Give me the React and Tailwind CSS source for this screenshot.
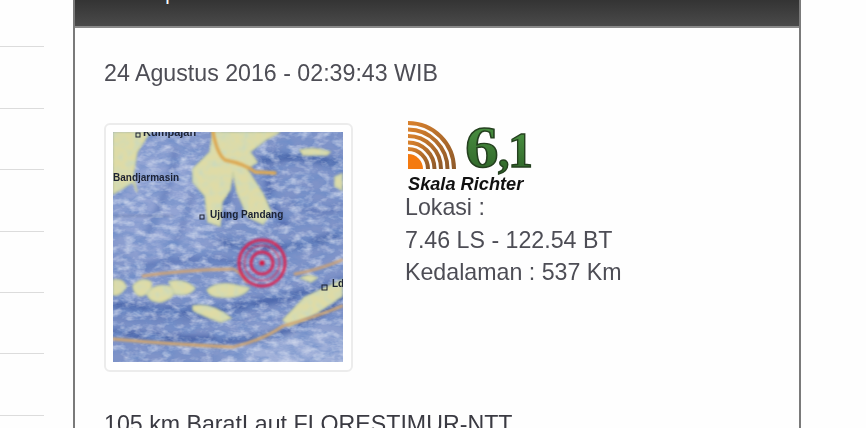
import React from 'react';

const LAND = [
    'M0 0 L37 0 L24 20 L20 44 L24 60 L20 50 L0 62 Z',
    'M100 0 L97 20 L80 37 L80 50 L92 64 L95 90 L107 94 L109 70 L117 58 L120 40 L124 60 L135 85 L150 92 L158 80 L150 62 L134 37 L144 30 L137 20 L154 7 L167 0 Z',
    'M187 18 Q202 14 217 20 L214 23 L190 23 Z',
    'M222 45 L229 42 L229 58 L222 54 Z',
    'M0 148 Q11 146 13 155 Q7 164 0 163 Z',
    'M20 154 Q28 144 38 150 Q40 161 28 164 Q21 163 20 154 Z',
    'M34 162 Q42 150 58 155 Q66 164 48 170 Q36 170 34 162 Z',
    'M56 150 Q70 146 82 156 Q78 164 62 162 Z',
    'M94 158 Q104 149 122 153 L136 156 Q130 166 110 165 Q98 166 94 158 Z',
    'M80 174 Q98 170 118 186 L108 190 Q90 184 80 178 Z',
    'M170 188 L192 165 L229 148 L229 164 L202 182 L176 194 Z',
    'M188 146 Q196 141 204 146 L198 150 Z',
];

const STREAKS = [
    ['M0 172 Q70 186 140 172 T229 150', '#3c5ba4', 7],
    ['M0 200 Q60 209 120 208 T229 166', '#37559f', 6],
    ['M150 28 Q190 18 229 34', '#4563a9', 9],
    ['M158 40 Q150 70 172 92', '#506bb0', 8],
    ['M62 18 Q60 50 34 104', '#5a74b6', 5],
    ['M110 110 Q160 125 229 102', '#4563a9', 7],
    ['M30 136 Q80 120 130 134', '#506bb0', 6],
    ['M112 44 L114 90', '#3c5ba4', 6],
    ['M80 60 Q70 100 52 130', '#6078b8', 4],
    ['M0 184 Q60 194 130 182', '#5f79b8', 4],
    ['M180 70 Q200 84 229 76', '#5a74b6', 5],
];

const QuakeMap = () => (
    <svg width="230" height="230" viewBox="0 0 230 230" className="block">
        <defs>
            <filter id="soft"><feGaussianBlur stdDeviation="1" /></filter>
            <filter id="softer"><feGaussianBlur stdDeviation="3.2" /></filter>
            <filter id="wide"><feGaussianBlur stdDeviation="14" /></filter>
            <filter id="grain" x="0" y="0" width="100%" height="100%">
                <feTurbulence type="fractalNoise" baseFrequency="0.06 0.12" numOctaves="4" seed="7" />
                <feColorMatrix values="0 0 0 0 0.16  0 0 0 0 0.27  0 0 0 0 0.58  1.9 0 0 0 -0.72" />
            </filter>
            <filter id="light" x="0" y="0" width="100%" height="100%">
                <feTurbulence type="fractalNoise" baseFrequency="0.09 0.15" numOctaves="3" seed="21" />
                <feColorMatrix values="0 0 0 0 0.76  0 0 0 0 0.8  0 0 0 0 0.9  0 1.5 0 0 -0.66" />
            </filter>
            <filter id="moss" x="0" y="0" width="100%" height="100%">
                <feTurbulence type="fractalNoise" baseFrequency="0.14" numOctaves="3" seed="4" />
                <feColorMatrix values="0 0 0 0 0.6  0 0 0 0 0.7  0 0 0 0 0.5  2.2 0 0 0 -0.85" />
            </filter>
            <clipPath id="land">
                {LAND.map(d => <path key={d} d={d} />)}
            </clipPath>
        </defs>

        {/* sea */}
        <rect width="230" height="230" fill="#7f93c8" />
        <ellipse cx="50" cy="70" rx="55" ry="70" fill="#93a4d4" filter="url(#wide)" />
        <ellipse cx="185" cy="225" rx="70" ry="30" fill="#a3b2da" filter="url(#wide)" />

        {/* trenches */}
        <g filter="url(#softer)" fill="none" strokeLinecap="round">
            {STREAKS.map(([d, c, w]) => <path key={d} d={d} stroke={c} strokeWidth={w} />)}
        </g>
        <rect width="230" height="230" filter="url(#grain)" />
        <rect width="230" height="230" filter="url(#light)" />

        {/* land */}
        <g filter="url(#soft)">
            <g fill="#dfdba6" stroke="#c9cfa0" strokeWidth="1.5">
                {LAND.map(d => <path key={d} d={d} />)}
            </g>
            <g clipPath="url(#land)">
                <rect width="230" height="230" filter="url(#moss)" />
            </g>
        </g>

        {/* ranges and plate boundaries */}
        <g fill="none" filter="url(#soft)" strokeLinecap="round" strokeLinejoin="round">
            <path d="M100 0 Q104 22 112 28 Q132 32 142 40 L162 41" stroke="#dca955" strokeWidth="3.4" />
            <path d="M30 144 Q70 138 120 137 Q128 140 134 150" stroke="#c9a27a" strokeWidth="2.8" />
            <path d="M0 207 Q54 212 120 215 Q150 208 170 194 Q200 186 229 174" stroke="#cfa673" strokeWidth="2.8" />
            <path d="M182 142 Q205 138 229 128" stroke="#c9a27a" strokeWidth="2.8" />
            <path d="M0 84 L60 84" stroke="#5c6f9f" strokeWidth="0.8" />
        </g>

        {/* rings */}
        <g fill="none" stroke="#d42a58" filter="url(#soft)">
            <circle cx="149" cy="131" r="23" strokeWidth="3" />
            <circle cx="149" cy="131" r="17.5" strokeWidth="2" opacity="0.65" />
            <circle cx="149" cy="131" r="11" strokeWidth="3" />
            <circle cx="149" cy="131" r="2.5" fill="#d8193f" strokeWidth="0.5" />
        </g>

        {/* place names */}
        <g fontFamily="Liberation Sans, sans-serif" fontWeight="700" fill="#1c2233" style={{ filter: 'blur(0.6px)' }}>
            <rect x="23" y="1" width="4" height="4" fill="none" stroke="#1c2233" />
            <text x="30" y="4" fontSize="11">Kumpajan</text>
            <text x="0" y="49" fontSize="10">Bandjarmasin</text>
            <rect x="87" y="83" width="4" height="4" fill="none" stroke="#1c2233" />
            <text x="97" y="86" fontSize="10">Ujung Pandang</text>
            <rect x="209" y="153" width="5" height="5" fill="none" stroke="#1c2233" />
            <text x="219" y="155" fontSize="10">Ld</text>
        </g>
    </svg>
);

// magnitude badge
const RichterLogo = () => {
    const radii = [46, 39.5, 33, 26.5, 20];
    return (
        <svg width="132" height="71" viewBox="0 0 132 71" className="block overflow-visible">
            <defs>
                <linearGradient id="green" x1="0" y1="0" x2="0" y2="1">
                    <stop offset="0" stopColor="#4f9a46" />
                    <stop offset="1" stopColor="#2c5f26" />
                </linearGradient>
                <linearGradient id="brown" x1="0" y1="0" x2="1" y2="1">
                    <stop offset="0" stopColor="#d8802c" />
                    <stop offset="1" stopColor="#8f5a2a" />
                </linearGradient>
            </defs>
            <g fill="none" stroke="url(#brown)" strokeWidth="4">
                {radii.map(r => (
                    <path key={r} d={`M3 ${49 - r} A${r} ${r} 0 0 1 ${3 + r} 49`} />
                ))}
            </g>
            <path d="M3 34 A15 15 0 0 1 18 49 L3 49 Z" fill="#f47a10" />
            <g fontFamily="Liberation Serif, serif" fontWeight="700" fill="url(#green)" stroke="#24401f" strokeWidth="1.4">
                <text x="0" y="0" fontSize="60" transform="translate(60 47) scale(1.12 1)">6</text>
                <text x="93" y="47" fontSize="46">,</text>
                <text x="103" y="47" fontSize="50">1</text>
            </g>
            <text x="3" y="70" fontFamily="Liberation Sans, sans-serif" fontWeight="700" fontStyle="italic" fontSize="18.2" fill="#111">Skala Richter</text>
        </svg>
    );
};

const App = () => {
    return (
        <div className="flex h-[428px] w-[866px] overflow-hidden bg-[#fefefe] font-['Liberation_Sans',sans-serif] text-[23.2px] text-[#4d4d55]">
            {/* side list */}
            <div className="w-[44px] shrink-0">
                <div className="h-[47px] border-b border-[#dcdcdc]" />
                <div className="h-[62px] border-b border-[#dcdcdc]" />
                <div className="h-[61px] border-b border-[#dcdcdc]" />
                <div className="h-[62px] border-b border-[#dcdcdc]" />
                <div className="h-[61px] border-b border-[#dcdcdc]" />
                <div className="h-[61px] border-b border-[#dcdcdc]" />
                <div className="h-[62px] border-b border-[#dcdcdc]" />
            </div>

            {/* main panel */}
            <div className="ml-[29px] h-full w-[728px] shrink-0 border-x-2 border-[#7a7a7a]">
                <div className="h-[28px] overflow-hidden border-b-2 border-[#8a8a8a] bg-gradient-to-b from-[#343434] to-[#4a4a4a] pl-[8px]">
                    <h2 className="-mt-[21px] text-[20px] leading-[28px] text-white">Info Gempa Terkini</h2>
                </div>
                <div className="px-[29px] blur-[0.5px]">
                    <p className="mt-[29px] h-[32px] leading-[32px]">24 Agustus 2016 - 02:39:43 WIB</p>
                    <div className="mt-[34px] flex">
                        <div className="h-[249px] w-[249px] rounded-[6px] border-2 border-[#ececec] bg-white p-[7px]">
                            <QuakeMap />
                        </div>
                        <div className="ml-[52px]">
                            <div className="-mt-[3px]"><RichterLogo /></div>
                            <p className="leading-[32.5px]">Lokasi :</p>
                            <p className="leading-[32.5px]">7.46 LS - 122.54 BT</p>
                            <p className="leading-[32.5px]">Kedalaman : 537 Km</p>
                        </div>
                    </div>
                    <p className="mt-[36px] leading-[32px] text-[#3a3a42]">105 km BaratLaut FLORESTIMUR-NTT</p>
                </div>
            </div>
        </div>
    );
};

export default App;
